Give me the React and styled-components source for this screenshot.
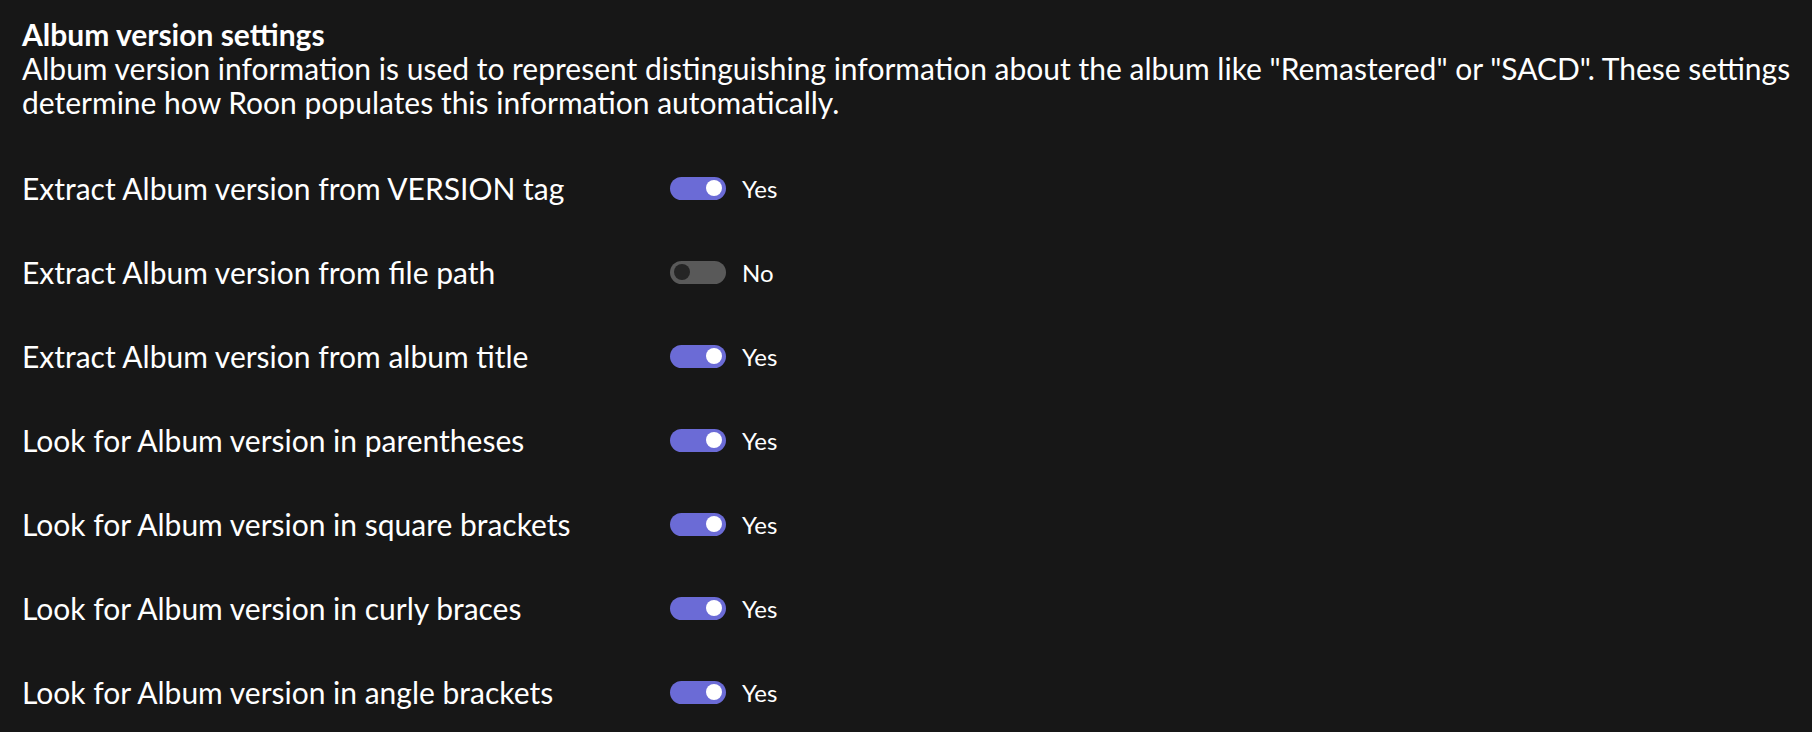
import React from "react";
import styled, { createGlobalStyle } from "styled-components";

const GlobalStyle = createGlobalStyle`
  html, body {
    margin: 0;
    padding: 0;
    background: #171717;
  }
  body {
    font-family: Lato, "Open Sans", sans-serif;
    color: #ffffff;
  }
`;

const settings = [
  { label: "Extract Album version from VERSION tag", on: true },
  { label: "Extract Album version from file path", on: false },
  { label: "Extract Album version from album title", on: true },
  { label: "Look for Album version in parentheses", on: true },
  { label: "Look for Album version in square brackets", on: true },
  { label: "Look for Album version in curly braces", on: true },
  { label: "Look for Album version in angle brackets", on: true },
];

const Toggle = ({ on }) => (
  <ToggleWrapper>
    <Track $on={on}>
      <Knob $on={on} />
    </Track>
    <ToggleLabel>{on ? "Yes" : "No"}</ToggleLabel>
  </ToggleWrapper>
);

const App = () => {
  return (
    <>
      <GlobalStyle />
      <Page>
        <Header>
          <Title>Album version settings</Title>
          <Description>
            Album version information is used to represent distinguishing
            information about the album like "Remastered" or "SACD". These
            settings determine how Roon populates this information
            automatically.
          </Description>
        </Header>
        <List>
          {settings.map((s) => (
            <Row key={s.label}>
              <Label>{s.label}</Label>
              <Toggle on={s.on} />
            </Row>
          ))}
        </List>
      </Page>
    </>
  );
};

export default App;

const Page = styled.div`
  display: flex;
  flex-direction: column;
  padding: 17px 20px 0 22px;
  height: 732px;
  box-sizing: border-box;
  overflow: hidden;
`;

const Header = styled.div`
  display: flex;
  flex-direction: column;
`;

const Title = styled.div`
  font-weight: 700;
  font-size: 30px;
  line-height: 34px;
`;

const Description = styled.div`
  font-size: 30px;
  line-height: 34px;
`;

const List = styled.div`
  display: flex;
  flex-direction: column;
  margin-top: 27px;
`;

const Row = styled.div`
  display: flex;
  align-items: center;
  height: 84px;
`;

const Label = styled.div`
  width: 648px;
  flex-shrink: 0;
  font-size: 30px;
`;

const ToggleWrapper = styled.div`
  display: flex;
  align-items: center;
  gap: 16px;
`;

const Track = styled.div`
  position: relative;
  width: 56px;
  height: 23px;
  border-radius: 12px;
  background: ${(p) => (p.$on ? "#6b6bd6" : "#595959")};
`;

const Knob = styled.div`
  position: absolute;
  top: 3.5px;
  left: ${(p) => (p.$on ? "36px" : "4px")};
  width: 16px;
  height: 16px;
  border-radius: 50%;
  background: ${(p) => (p.$on ? "#ffffff" : "#252525")};
`;

const ToggleLabel = styled.span`
  font-size: 24px;
`;
